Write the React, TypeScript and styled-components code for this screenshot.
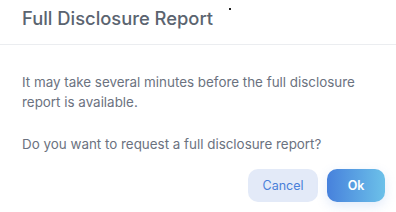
import React from "react";
import styled, { createGlobalStyle } from "styled-components";

const Global = createGlobalStyle`
  html, body { margin: 0; padding: 0; background: #ffffff; }
  body { font-family: Inter, "Noto Sans", sans-serif; }
  * { box-sizing: border-box; }
`;

const Dialog = styled.div`
  position: relative;
  width: 396px;
  height: 212px;
  background: #ffffff;
  display: flex;
  flex-direction: column;
`;

const Header = styled.div`
  height: 45px;
  padding: 0 22px;
  display: flex;
  align-items: center;
  border-bottom: 1px solid #ebedf0;
`;

const Title = styled.h2`
  margin: 0;
  font-size: 18.33px;
  font-weight: 500;
  color: #5b6470;
  line-height: 24px;
  margin-top: -8px;
`;

const Body = styled.div`
  padding: 27px 22px 0;
  display: flex;
  flex-direction: column;
  gap: 22px;
`;

const Para = styled.p`
  margin: 0;
  font-size: 13.4px;
  line-height: 20px;
  color: #6b7280;
`;

const Footer = styled.div`
  display: flex;
  justify-content: flex-end;
  gap: 9px;
  padding: 15px 11px 0;
`;

const Button = styled.button<{ $primary?: boolean }>`
  height: 33px;
  border: none;
  border-radius: 10px;
  font-family: Inter, "Noto Sans", sans-serif;
  font-size: 12.5px;
  cursor: pointer;
  padding: 0;
  width: ${(p) => (p.$primary ? "58px" : "70px")};
  font-weight: ${(p) => (p.$primary ? 600 : 400)};
  color: ${(p) => (p.$primary ? "#ffffff" : "#4a80d9")};
  background: ${(p) =>
    p.$primary ? "linear-gradient(90deg, #4781dc 0%, #6cc1e9 100%)" : "#e3eaf8"};
  box-shadow: ${(p) => (p.$primary ? "0 4px 12px rgba(90, 140, 220, 0.18)" : "none")};
`;

const Dot = styled.span`
  position: absolute;
  left: 229px;
  top: 8px;
  width: 2px;
  height: 2px;
  background: #222;
`;

export default function App() {
  return (
    <>
      <Global />
      <Dialog>
        <Dot />
        <Header>
          <Title>Full Disclosure Report</Title>
        </Header>
        <Body>
          <Para>
            It may take several minutes before the full disclosure report is available.
          </Para>
          <Para>Do you want to request a full disclosure report?</Para>
        </Body>
        <Footer>
          <Button>Cancel</Button>
          <Button $primary>Ok</Button>
        </Footer>
      </Dialog>
    </>
  );
}
